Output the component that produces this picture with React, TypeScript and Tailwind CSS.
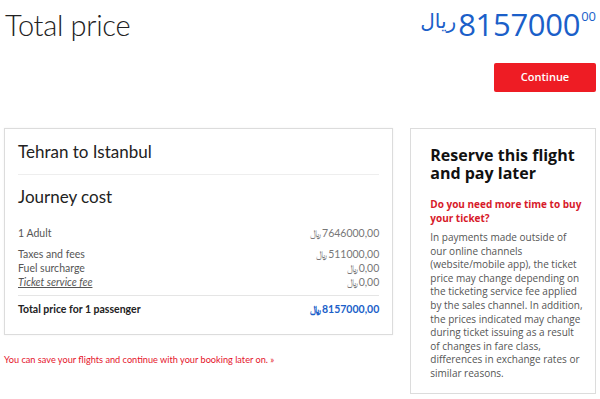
import React from "react";

const R = () => (
  <span className="inline-block mr-[1px] text-[10px] leading-none" style={{ fontFamily: '"DejaVu Sans", sans-serif' }}>﷼</span>
);

export default function App() {
  const font = { fontFamily: '"Open Sans", "Noto Sans", sans-serif' };
  const lato = { fontFamily: '"Lato", "Open Sans", sans-serif' };
  return (
    <div className="w-[600px] h-[399px] bg-white overflow-hidden relative" style={font}>
      <div className="flex justify-between items-start">
        <h1 className="pl-[5px] pt-[7px] text-[29px] font-light text-[#222] leading-[36px] tracking-[-0.3px]" style={lato}>
          Total price
        </h1>
        <div className="flex flex-col items-end pr-[4px]">
          <div className="flex items-start text-[#1b5fc9] pt-[6px]">
            <span className="text-[20px] leading-[30px] mr-[2px]" style={{ fontFamily: '"DejaVu Sans", sans-serif' }}>ریال</span>
            <span className="text-[31px] leading-[36px] font-normal tracking-[-0.3px]">8157000</span>
            <span className="text-[13px] leading-[20px] ml-[1px]">00</span>
          </div>
          <button className="mt-[21px] w-[102px] h-[29px] rounded-[2px] bg-[#ee1c24] text-white text-[11px] font-semibold">
            Continue
          </button>
        </div>
      </div>

      <div className="flex mt-[36px] px-[4px] items-start">
        <div className="w-[390px]" style={lato}>
          <div className="border border-[#dcdcdc] px-[13px] pt-[10px] pb-[18px] shadow-[0_0_2px_rgba(0,0,0,0.06)]">
            <div className="text-[17px] text-[#222] leading-[26px] pb-[9px] border-b border-[#eee]">Tehran to Istanbul</div>
            <div className="text-[17px] text-[#222] leading-[26px] pt-[9px]">Journey cost</div>
            <div className="mt-[16px] text-[10.5px] text-[#555] leading-[14px]">
              <div className="flex justify-between">
                <span>1 Adult</span>
                <span className="text-[#777]"><R />7646000,00</span>
              </div>
              <div className="flex justify-between mt-[7px]">
                <span>Taxes and fees</span>
                <span className="text-[#777]"><R />511000,00</span>
              </div>
              <div className="flex justify-between">
                <span>Fuel surcharge</span>
                <span className="text-[#777]"><R />0,00</span>
              </div>
              <div className="flex justify-between">
                <span className="italic underline">Ticket service fee</span>
                <span className="text-[#777]"><R />0,00</span>
              </div>
              <div className="border-t border-[#e5e5e5] mt-[6px] pt-[6px] flex justify-between font-bold text-[#222]">
                <span>Total price for 1 passenger</span>
                <span className="text-[#1b5fc9]"><R />8157000,00</span>
              </div>
            </div>
          </div>
          <div className="mt-[18px] text-[9.2px] text-[#e5132a]">
            You can save your flights and continue with your booking later on. »
          </div>
        </div>

        <div className="ml-[17px] w-[186px] h-[266px] border border-[#dcdcdc] pl-[19px] pr-[10px] pt-[17px]">
          <div className="text-[16px] font-bold text-[#111] leading-[18px]">Reserve this flight and pay later</div>
          <div className="mt-[16px] text-[10px] font-bold text-[#d71a2a] leading-[13.5px]">Do you need more time to buy your ticket?</div>
          <div className="mt-[6px] text-[10px] text-[#555] leading-[13.6px]">
            In payments made outside of our online channels (website/mobile app), the ticket price may change depending on the ticketing service fee applied by the sales channel. In addition, the prices indicated may change during ticket issuing as a result of changes in fare class, differences in exchange rates or similar reasons.
          </div>
        </div>
      </div>
    </div>
  );
}
